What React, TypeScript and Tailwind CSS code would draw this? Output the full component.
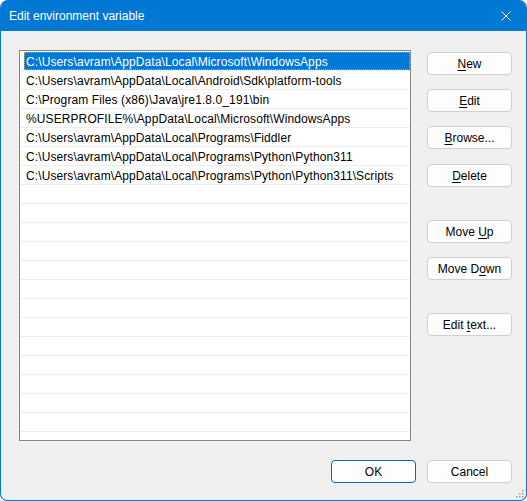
import React from 'react';

const paths = [
  'C:\\Users\\avram\\AppData\\Local\\Microsoft\\WindowsApps',
  'C:\\Users\\avram\\AppData\\Local\\Android\\Sdk\\platform-tools',
  'C:\\Program Files (x86)\\Java\\jre1.8.0_191\\bin',
  '%USERPROFILE%\\AppData\\Local\\Microsoft\\WindowsApps',
  'C:\\Users\\avram\\AppData\\Local\\Programs\\Fiddler',
  'C:\\Users\\avram\\AppData\\Local\\Programs\\Python\\Python311',
  'C:\\Users\\avram\\AppData\\Local\\Programs\\Python\\Python311\\Scripts',
];

const rows = [...paths, ...Array(13).fill('')];

function Btn({
  pre = '',
  key1,
  post = '',
  className = '',
  primary = false,
}: {
  pre?: string;
  key1?: string;
  post?: string;
  className?: string;
  primary?: boolean;
}) {
  return (
    <button
      className={
        'h-[23px] w-[85px] rounded-[4px] border bg-[#fdfdfd] text-[12px] leading-none text-black flex items-center justify-center ' +
        (primary ? 'border-[#0067c0] ' : 'border-[#d0d0d0] ') +
        className
      }
    >
      <span>
        {pre}
        {key1 && <span className="underline underline-offset-2">{key1}</span>}
        {post}
      </span>
    </button>
  );
}

export default function App() {
  return (
    <div
      className="w-[527px] h-[501px] bg-white"
      style={{ fontFamily: '"Liberation Sans", Arial, sans-serif' }}
    >
      <div className="w-full h-full flex flex-col rounded-t-[8px] rounded-b-[7px] border border-t-0 border-[#0078d4] bg-[#f0f0f0] overflow-hidden">
        <div className="h-[31px] shrink-0 bg-[#0078d4] flex items-center justify-between pl-[8px] pr-[10px]">
          <span className="text-white text-[12px] pt-[1px]">Edit environment variable</span>
          <svg width="10" height="10" viewBox="0 0 10 10" className="mr-[5px]">
            <path d="M0.5 0.5 L9.5 9.5 M9.5 0.5 L0.5 9.5" stroke="white" strokeWidth="1" />
          </svg>
        </div>

        <div className="flex-1 flex flex-col relative">
          <div className="flex pl-[18px] pt-[19px]">
            <div className="w-[392px] h-[391px] border border-[#868686] bg-white overflow-hidden pt-[1px]">
              {rows.map((p, i) => (
                <div key={i} className="h-[19px] border-b border-[#ededed]">
                  <div
                    className={
                      'ml-[4px] h-[18px] pl-[2px] pt-[1px] flex items-center text-[12px] tracking-[0.1px] whitespace-nowrap ' +
                      (i === 0
                        ? 'bg-[#0078d7] text-white outline-1 outline-dotted outline-[#ff9a00] -outline-offset-1'
                        : 'text-black')
                    }
                  >
                    {p}
                  </div>
                </div>
              ))}
            </div>

            <div className="flex flex-col ml-[16px] pt-[2px]">
              <Btn key1="N" post="ew" />
              <Btn key1="E" post="dit" className="mt-[14px]" />
              <Btn key1="B" post="rowse..." className="mt-[14px]" />
              <Btn key1="D" post="elete" className="mt-[15px]" />
              <Btn pre="Move " key1="U" post="p" className="mt-[33px]" />
              <Btn pre="Move D" key1="o" post="wn" className="mt-[14px]" />
              <Btn pre="Edit " key1="t" post="ext..." className="mt-[33px]" />
            </div>
          </div>

          <div className="flex justify-end gap-[11px] pr-[14px] mt-[19px]">
            <Btn pre="OK" primary />
            <Btn pre="Cancel" />
          </div>

          <svg width="9" height="9" viewBox="0 0 9 9" className="absolute right-[2px] bottom-[2px]">
            <g fill="#a0a0a0">
              <rect x="7" y="1" width="1.5" height="1.5" />
              <rect x="4" y="4" width="1.5" height="1.5" />
              <rect x="7" y="4" width="1.5" height="1.5" />
              <rect x="1" y="7" width="1.5" height="1.5" />
              <rect x="4" y="7" width="1.5" height="1.5" />
              <rect x="7" y="7" width="1.5" height="1.5" />
            </g>
          </svg>
        </div>
      </div>
    </div>
  );
}
